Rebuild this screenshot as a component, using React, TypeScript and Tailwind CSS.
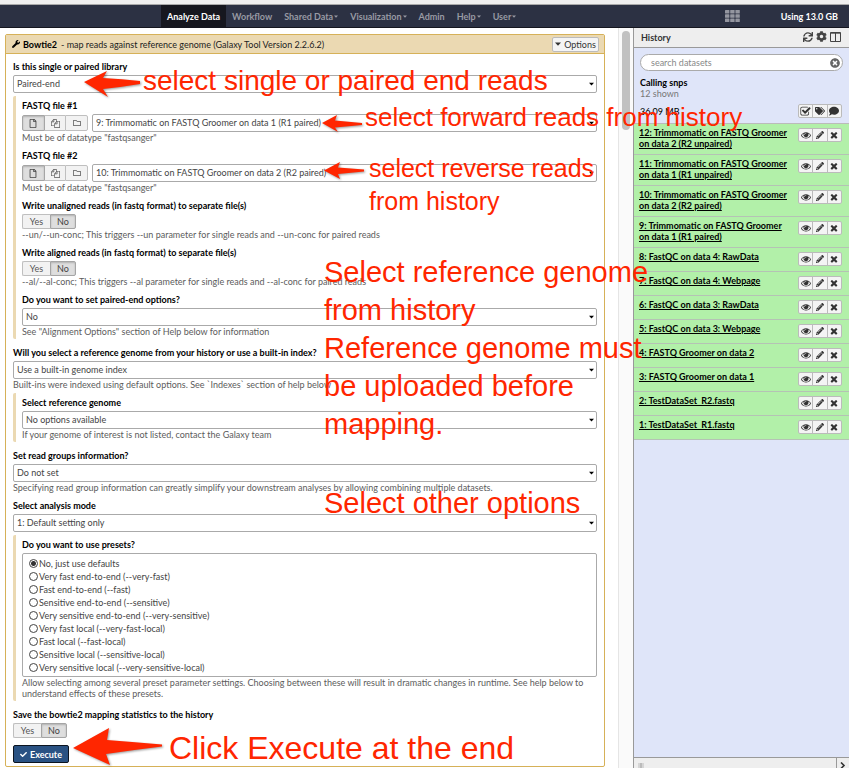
import React from "react";
import {
  FaWrench,
  FaRegFile,
  FaRegFolder,
  FaCheck,
  FaCog,
  FaSync,
  FaTags,
  FaComment,
  FaPencilAlt,
  FaTimesCircle,
} from "react-icons/fa";

function Glyph({ d, className }: { d: string; className: string }) {
  return (
    <svg viewBox="0 0 1792 1792" fill="currentColor" className={className} aria-hidden="true">
      <path d={d} />
    </svg>
  );
}

const FILES =
  "M1696 384q40 0 68 28t28 68v1216q0 40-28 68t-68 28h-960q-40 0-68-28t-28-68v-288h-544q-40 0-68-28t-28-68v-672q0-40 20-88t48-76l408-408q28-28 76-48t88-20h416q40 0 68 28t28 68v328q68-40 128-40h416zm-544 213l-299 299h299v-299zm-640-384l-299 299h299v-299zm196 647l316-316v-416h-384v416q0 40-28 68t-68 28h-416v640h512v-256q0-40 20-88t48-76zm956 804v-1152h-384v416q0 40-28 68t-68 28h-416v640h896z";
const EYE =
  "M1664 960q-152-236-381-353 61 104 61 225 0 185-131.5 316.5t-316.5 131.5-316.5-131.5-131.5-316.5q0-121 61-225-229 117-381 353 133 205 333.5 326.5t434.5 121.5 434.5-121.5 333.5-326.5zm-720-384q0-20-14-34t-34-14q-125 0-214.5 89.5t-89.5 214.5q0 20 14 34t34 14 34-14 14-34q0-86 61-147t147-61q20 0 34-14t14-34zm848 384q0 34-20 69-140 230-376.5 368.5t-499.5 138.5-499.5-139-376.5-368q-20-35-20-69t20-69q140-229 376.5-368t499.5-139 499.5 139 376.5 368q20 35 20 69z";
const TIMES =
  "M1490 1322q0 40-28 68l-136 136q-28 28-68 28t-68-28l-294-294-294 294q-28 28-68 28t-68-28l-136-136q-28-28-28-68t28-68l294-294-294-294q-28-28-28-68t28-68l136-136q28-28 68-28t68 28l294 294 294-294q28-28 68-28t68 28l136 136q28 28 28 68t-28 68l-294 294 294 294q28 28 28 68z";
const CHECK_SQUARE =
  "M1472 930v318q0 119-84.5 203.5t-203.5 84.5h-832q-119 0-203.5-84.5t-84.5-203.5v-832q0-119 84.5-203.5t203.5-84.5h832q63 0 117 25 15 7 18 23 3 17-9 29l-49 49q-10 10-23 10-3 0-9-2-23-6-45-6h-832q-66 0-113 47t-47 113v832q0 66 47 113t113 47h832q66 0 113-47t47-113v-254q0-13 9-22l64-64q10-10 23-10 6 0 12 3 20 8 20 29zm231-489l-814 814q-24 24-57 24t-57-24l-430-430q-24-24-24-57t24-57l110-110q24-24 57-24t57 24l263 263 647-647q24-24 57-24t57 24l110 110q24 24 24 57t-24 57z";

function Caret({ className }: { className: string }) {
  return (
    <svg viewBox="0 0 6 4" fill="currentColor" className={className} aria-hidden="true">
      <path d="M0 0.5h6L3 3.8z" />
    </svg>
  );
}

const NAV = [
  { label: "Analyze Data", active: true },
  { label: "Workflow" },
  { label: "Shared Data", menu: true },
  { label: "Visualization", menu: true },
  { label: "Admin" },
  { label: "Help", menu: true },
  { label: "User", menu: true },
];

function Masthead() {
  return (
    <header className="flex h-[23px] items-stretch border-b border-[#15161f] bg-[#2c3143] pr-[11px] pl-[161px] font-bold">
      <nav className="flex">
        {NAV.map((n) => (
          <a
            key={n.label}
            href="#"
            className={
              n.active
                ? "flex items-center bg-[#16171f] px-[6px] text-white"
                : "flex items-center px-[6px] text-[#989aa3]"
            }
          >
            {n.label}
            {n.menu && <Caret className="ml-px h-[3px] w-[4px]" />}
          </a>
        ))}
      </nav>
      <div className="ml-auto flex items-center gap-[41px] text-white">
        <svg viewBox="0 0 15 12" fill="#9496a0" className="h-[12px] w-[15px]" aria-hidden="true">
          {[0, 4.3, 8.6].map((y) =>
            [0, 5.2, 10.4].map((x) => <rect key={x + "-" + y} x={x} y={y} width="4.4" height="3.4" rx="0.5" />)
          )}
        </svg>
        <span>Using 13.0 GB</span>
      </div>
    </header>
  );
}

function Row({ id, label, help, children }: { id: string; label: string; help?: string; children: React.ReactNode }) {
  return (
    <div>
      <label htmlFor={id} className="mb-[3px] block font-bold text-black">
        {label}
      </label>
      {children}
      {help && <p className="text-[#5c5c5c]">{help}</p>}
    </div>
  );
}

function Select({ id, value }: { id: string; value: string }) {
  return (
    <div className="relative min-w-0 flex-1 text-[#444]">
      <select
        id={id}
        className="block h-[18px] w-full appearance-none rounded-xs border border-[#aaa] bg-white px-[3px] leading-[16px]"
      >
        <option>{value}</option>
      </select>
      <Caret className="pointer-events-none absolute top-[7px] right-[3px] h-[4px] w-[5px] text-black" />
    </div>
  );
}

function Section({ children }: { children: React.ReactNode }) {
  return (
    <div className="mt-[3px] flex flex-col gap-[7px] rounded-l-xs border-l-[3px] border-[#ebd9b2] pt-[4px] pb-[2px] pl-[6px]">
      {children}
    </div>
  );
}

const SEG = "flex items-center justify-center border border-[#bfbfbf] bg-[#f2f2f2] text-[#555]";
const SEG_ON = "flex items-center justify-center border border-[#a5a5a5] bg-[#dedede] text-[#444] shadow-[inset_0_1px_2px_#0003]";

function FilePicker({ id, value }: { id: string; value: string }) {
  return (
    <div className="flex gap-[4px]">
      <div className="flex h-[16px] w-[66px] self-center">
        <button type="button" aria-label="Single dataset" className={SEG_ON + " flex-1 rounded-l-xs"}>
          <FaRegFile className="h-[9px] w-[8px]" />
        </button>
        <button type="button" aria-label="Multiple datasets" className={SEG + " flex-1 border-x-0"}>
          <Glyph d={FILES} className="size-[9px]" />
        </button>
        <button type="button" aria-label="Dataset collection" className={SEG + " flex-1 rounded-r-xs"}>
          <FaRegFolder className="size-[8px]" />
        </button>
      </div>
      <Select id={id} value={value} />
    </div>
  );
}

function YesNo({ id }: { id: string }) {
  return (
    <div className="flex h-[15px]">
      <button type="button" className={SEG + " w-[28px] rounded-l-xs border-r-0"}>
        Yes
      </button>
      <button type="button" id={id} className={SEG_ON + " w-[26px] rounded-r-xs"}>
        No
      </button>
    </div>
  );
}

const PRESETS = [
  "No, just use defaults",
  "Very fast end-to-end (--very-fast)",
  "Fast end-to-end (--fast)",
  "Sensitive end-to-end (--sensitive)",
  "Very sensitive end-to-end (--very-sensitive)",
  "Very fast local (--very-fast-local)",
  "Fast local (--fast-local)",
  "Sensitive local (--sensitive-local)",
  "Very sensitive local (--very-sensitive-local)",
];

function ToolForm() {
  return (
    <main className="min-w-0 flex-1 pt-[6px] pr-[13px] pb-px pl-[5px]">
      <form className="rounded-xs border border-[#d6b158]">
        <div className="flex h-[19px] items-center border-b border-[#d6b158] bg-[#ebd9b2] pr-[5px] pl-[6px] text-[#222]">
          <FaWrench className="mr-[3px] size-[8px] text-black" />
          <b className="mr-[4px] text-black">Bowtie2</b>
          <span>- map reads against reference genome (Galaxy Tool Version 2.2.6.2)</span>
          <button
            type="button"
            className="ml-auto flex h-[15px] w-[47px] items-center justify-center gap-[3px] rounded-xs border border-[#bbb] bg-[#f4f4f4] text-[#333]"
          >
            <Caret className="h-[4px] w-[6px]" />
            Options
          </button>
        </div>
        <div className="px-[7px] pt-[7px] pb-[3px]">
          <Row id="library" label="Is this single or paired library">
            <Select id="library" value="Paired-end" />
          </Row>
          <Section>
            <Row id="fastq1" label="FASTQ file #1" help={'Must be of datatype "fastqsanger"'}>
              <FilePicker id="fastq1" value="9: Trimmomatic on FASTQ Groomer on data 1 (R1 paired)" />
            </Row>
            <Row id="fastq2" label="FASTQ file #2" help={'Must be of datatype "fastqsanger"'}>
              <FilePicker id="fastq2" value="10: Trimmomatic on FASTQ Groomer on data 2 (R2 paired)" />
            </Row>
            <Row
              id="unaligned"
              label="Write unaligned reads (in fastq format) to separate file(s)"
              help="--un/--un-conc; This triggers --un parameter for single reads and --un-conc for paired reads"
            >
              <YesNo id="unaligned" />
            </Row>
            <Row
              id="aligned"
              label="Write aligned reads (in fastq format) to separate file(s)"
              help="--al/--al-conc; This triggers --al parameter for single reads and --al-conc for paired reads"
            >
              <YesNo id="aligned" />
            </Row>
            <Row
              id="pairedopts"
              label="Do you want to set paired-end options?"
              help={'See "Alignment Options" section of Help below for information'}
            >
              <Select id="pairedopts" value="No" />
            </Row>
          </Section>
          <div className="mt-[8px]">
            <Row
              id="refsource"
              label="Will you select a reference genome from your history or use a built-in index?"
              help="Built-ins were indexed using default options. See `Indexes` section of help below"
            >
              <Select id="refsource" value="Use a built-in genome index" />
            </Row>
          </div>
          <Section>
            <Row
              id="genome"
              label="Select reference genome"
              help="If your genome of interest is not listed, contact the Galaxy team"
            >
              <Select id="genome" value="No options available" />
            </Row>
          </Section>
          <div className="mt-[8px] flex flex-col gap-[7px]">
            <Row
              id="groups"
              label="Set read groups information?"
              help="Specifying read group information can greatly simplify your downstream analyses by allowing combining multiple datasets."
            >
              <Select id="groups" value="Do not set" />
            </Row>
            <Row id="mode" label="Select analysis mode">
              <Select id="mode" value="1: Default setting only" />
            </Row>
          </div>
          <Section>
            <Row
              id="preset-0"
              label="Do you want to use presets?"
              help="Allow selecting among several preset parameter settings. Choosing between these will result in dramatic changes in runtime. See help below to understand effects of these presets."
            >
              <div className="rounded-xs border border-[#aaa] px-[6px] pt-[3px] pb-[2px] text-[#444]">
                {PRESETS.map((p, i) => (
                  <div key={p} className="flex h-[13px] items-center gap-px">
                    <input
                      type="radio"
                      name="preset"
                      id={"preset-" + i}
                      defaultChecked={i === 0}
                      className="size-[9px] appearance-none rounded-full border border-[#444] checked:bg-[radial-gradient(#333_2px,transparent_3px)]"
                    />
                    <label htmlFor={"preset-" + i}>{p}</label>
                  </div>
                ))}
              </div>
            </Row>
          </Section>
          <div className="mt-[8px] flex flex-col gap-[7px]">
            <Row id="stats" label="Save the bowtie2 mapping statistics to the history">
              <YesNo id="stats" />
            </Row>
            <button
              type="button"
              className="flex h-[18px] w-[56px] items-center justify-center gap-[3px] rounded-xs border border-[#0c1420] bg-[#2a5283] font-bold text-white"
            >
              <FaCheck className="size-[7px]" />
              Execute
            </button>
          </div>
        </div>
      </form>
    </main>
  );
}

const DATASETS = [
  "12: Trimmomatic on FASTQ Groomer on data 2 (R2 unpaired)",
  "11: Trimmomatic on FASTQ Groomer on data 1 (R1 unpaired)",
  "10: Trimmomatic on FASTQ Groomer on data 2 (R2 paired)",
  "9: Trimmomatic on FASTQ Groomer on data 1 (R1 paired)",
  "8: FastQC on data 4: RawData",
  "7: FastQC on data 4: Webpage",
  "6: FastQC on data 3: RawData",
  "5: FastQC on data 3: Webpage",
  "4: FASTQ Groomer on data 2",
  "3: FASTQ Groomer on data 1",
  "2: TestDataSet_R2.fastq",
  "1: TestDataSet_R1.fastq",
];

function IconGroup({ items }: { items: { label: string; icon: React.ReactNode }[] }) {
  return (
    <div className="flex h-[14px] w-[44px] shrink-0 divide-x divide-[#bbb] rounded-xs border border-[#bbb] bg-[#f4f4f4] text-[#333]">
      {items.map((it) => (
        <button key={it.label} type="button" aria-label={it.label} className="flex flex-1 items-center justify-center">
          {it.icon}
        </button>
      ))}
    </div>
  );
}

function History() {
  return (
    <aside className="flex w-[216px] shrink-0 flex-col border-l border-[#999] bg-[#dfe5f9]">
      <div className="flex h-[20px] items-center justify-between border-b border-[#999] bg-[#eee] pr-[8px] pl-[7px] text-[#333]">
        <h2 className="font-bold">History</h2>
        <div className="flex items-center gap-[3px] pb-[2px] text-[#444]">
          <FaSync className="size-[10px]" />
          <FaCog className="size-[11px]" />
          <svg viewBox="0 0 11 10" fill="none" stroke="currentColor" className="h-[10px] w-[11px]" aria-hidden="true">
            <path d="M0.5 0.5h10v9h-10zM0.5 1.2h10M5.5 1v8.5" />
          </svg>
        </div>
      </div>
      <div className="px-[6px] pt-[6px]">
        <div className="flex h-[17px] items-center rounded-full border border-[#aaa] bg-white pr-[2px] pl-[10px]">
          <input
            type="text"
            aria-label="search datasets"
            placeholder="search datasets"
            className="min-w-0 flex-1 outline-none placeholder:text-[#888]"
          />
          <FaTimesCircle className="size-[10px] text-[#666]" />
        </div>
        <div className="mt-[6px] font-bold text-black">Calling snps</div>
        <div className="text-[#777]">12 shown</div>
        <div className="mt-[5px] flex h-[14px] items-center justify-between pr-[1px] text-black">
          <span>36.09 MB</span>
          <IconGroup
            items={[
              { label: "Select datasets", icon: <Glyph d={CHECK_SQUARE} className="size-[11px]" /> },
              { label: "Tags", icon: <FaTags className="size-[10px]" /> },
              { label: "Annotation", icon: <FaComment className="size-[10px]" /> },
            ]}
          />
        </div>
      </div>
      <ul className="mt-[5px] border-t border-[#bbb]">
        {DATASETS.map((d) => (
          <li
            key={d}
            className="flex min-h-[24px] items-start justify-between border-b border-[#b5c2b5] bg-[#b2f0a9] pt-[3px] pr-[7px] pb-[5px] pl-[5px]"
          >
            <a href="#" className="w-[154px] font-bold text-black underline">
              {d}
            </a>
            <div className="pt-px">
              <IconGroup
                items={[
                  { label: "View data", icon: <Glyph d={EYE} className="size-[10px]" /> },
                  { label: "Edit attributes", icon: <FaPencilAlt className="size-[8px]" /> },
                  { label: "Delete", icon: <Glyph d={TIMES} className="size-[10px]" /> },
                ]}
              />
            </div>
          </li>
        ))}
      </ul>
      <div className="mt-auto flex h-[11px] items-end justify-between overflow-hidden border-t border-[#999] bg-[#eee]">
        <div className="ml-[4px] h-[5px] w-[6px] border-x-2 border-[#d5d5d5] bg-[#bbb]" />
        <div className="flex h-full w-[13px] items-end justify-center border-l border-[#999]">
          <svg viewBox="0 0 6 6" fill="none" stroke="#333" strokeWidth="1.6" className="size-[6px]" aria-hidden="true">
            <path d="M1 0.5L4 3.5L1 6.5" />
          </svg>
        </div>
      </div>
    </aside>
  );
}

function Arrow({ className, d, box }: { className: string; d: string; box: string }) {
  return (
    <svg viewBox={box} fill="#ff2600" className={"absolute drop-shadow-[1px_1px_1px_#0006] " + className} aria-hidden="true">
      <path d={d} />
    </svg>
  );
}

function Annotations() {
  return (
    <div className="pointer-events-none absolute inset-0 font-['Liberation_Sans',sans-serif] text-[#ff2600]">
      <Arrow className="top-[70px] left-[84px] h-[28px] w-[57px]" box="0 0 57 28" d="M0 12L23 1L19 8Q38 9 56 11V14Q38 17 19 19L24 27Z" />
      <p className="absolute top-[64px] left-[143px] text-[28px] leading-[34px] whitespace-nowrap">
        select single or paired end reads
      </p>
      <Arrow className="top-[115px] left-[322px] h-[18px] w-[41px]" box="0 0 41 18" d="M0 8L15 0L13 5.5L40 8V10L13 12.5L16 17Z" />
      <p className="absolute top-[101px] left-[365px] text-[26px] leading-[32px] whitespace-nowrap">
        select forward reads from history
      </p>
      <Arrow className="top-[162px] left-[324px] h-[18px] w-[41px]" box="0 0 41 18" d="M0 8.5L16 0L14 5.5L40 7.5V9.5L14 12L16 17Z" />
      <p className="absolute top-[152px] left-[369px] text-[25px] leading-[33px] whitespace-nowrap">
        select reverse reads
        <br />
        from history
      </p>
      <p className="absolute top-[253px] left-[324px] text-[29px] leading-[38px] whitespace-nowrap">
        Select reference genome
        <br />
        from history
        <br />
        Reference genome must
        <br />
        be uploaded before
        <br />
        mapping.
      </p>
      <p className="absolute top-[484px] left-[324px] text-[29px] leading-[38px] whitespace-nowrap">
        Select other options
      </p>
      <Arrow className="top-[728px] left-[73px] h-[38px] w-[90px]" box="0 0 90 38" d="M0 20L36 0L34 12Q60 14 89 16.5V18.5Q60 22 33 26L37 37Z" />
      <p className="absolute top-[729px] left-[169px] text-[32px] leading-[38px] whitespace-nowrap">
        Click Execute at the end
      </p>
    </div>
  );
}

export default function App() {
  return (
    <div className="relative bg-white font-[Lato,'Noto_Sans',sans-serif] text-[9px] leading-[11px]">
      <div className="h-[5px] border-b border-[#aaa] bg-[#f0f0f0]" />
      <Masthead />
      <div className="flex items-stretch">
        <ToolForm />
        <div className="w-[15px] shrink-0 border-l border-[#e5e5e5] bg-[#fafafa] pt-[3px] pl-[3px]">
          <div className="h-[99px] w-[8px] rounded-full bg-[#c1c1c1]" />
        </div>
        <History />
      </div>
      <Annotations />
    </div>
  );
}
